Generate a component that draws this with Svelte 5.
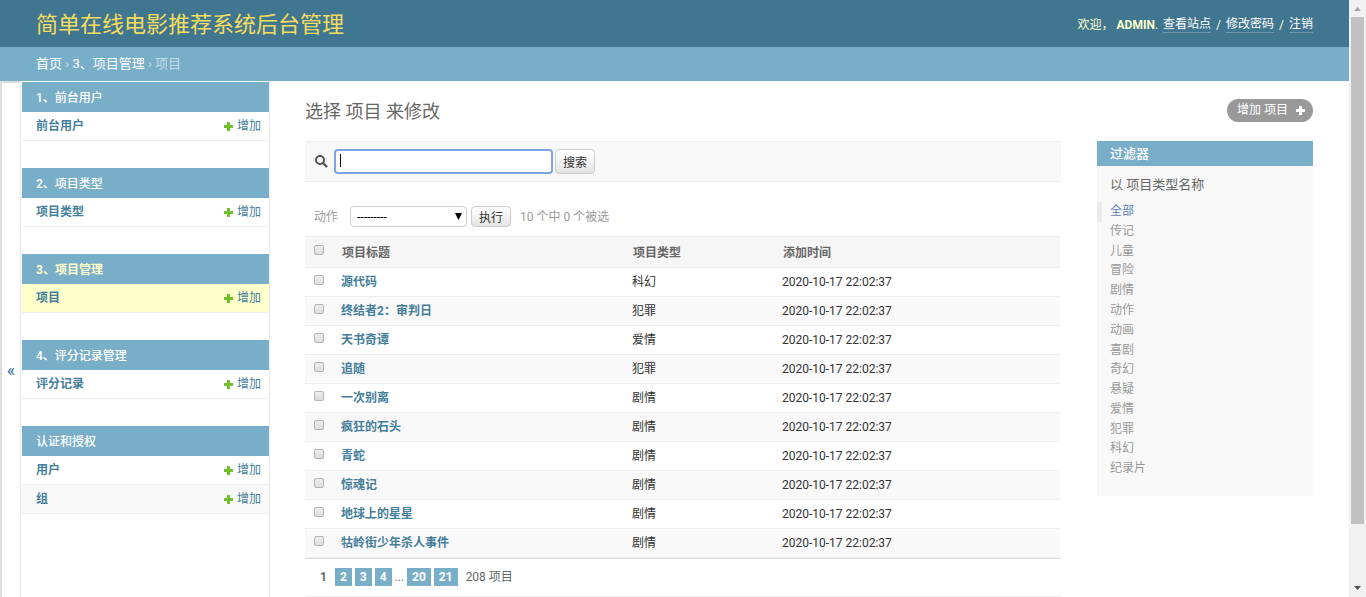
<script>
  const apps = [
    { name: '1、前台用户', models: ['前台用户'] },
    { name: '2、项目类型', models: ['项目类型'] },
    { name: '3、项目管理', models: ['项目'], current: true },
    { name: '4、评分记录管理', models: ['评分记录'] },
    { name: '认证和授权', models: ['用户', '组'] }
  ];

  const rows = [
    { title: '源代码', type: '科幻' },
    { title: '终结者2：审判日', type: '犯罪' },
    { title: '天书奇谭', type: '爱情' },
    { title: '追随', type: '犯罪' },
    { title: '一次别离', type: '剧情' },
    { title: '疯狂的石头', type: '剧情' },
    { title: '青蛇', type: '剧情' },
    { title: '惊魂记', type: '剧情' },
    { title: '地球上的星星', type: '剧情' },
    { title: '牯岭街少年杀人事件', type: '剧情' }
  ];
  const added = '2020-10-17 22:02:37';

  const filters = ['全部', '传记', '儿童', '冒险', '剧情', '动作', '动画', '喜剧', '奇幻', '悬疑', '爱情', '犯罪', '科幻', '纪录片'];

  let query = $state('');
  let selectedFilter = $state('全部');
  let checked = $state(rows.map(() => false));
  let showSidebar = $state(true);

  let count = $derived(checked.filter(Boolean).length);

  function toggleAll(e) {
    checked = rows.map(() => e.target.checked);
  }
</script>

<div class="shell">
  <div class="page">
    <header class="header">
      <h1 class="site-name"><a href="#home">简单在线电影推荐系统后台管理</a></h1>
      <div class="user-tools">
        <span>欢迎， <strong>ADMIN</strong>.</span>
        <a href="#site">查看站点</a>
        <span>/</span>
        <a href="#password">修改密码</a>
        <span>/</span>
        <a href="#logout">注销</a>
      </div>
    </header>

    <nav class="breadcrumbs">
      <a href="#home">首页</a> › <a href="#app3">3、项目管理</a> › 项目
    </nav>

    <div class="main">
      <button class="toggle" aria-label="切换导航" onclick={() => (showSidebar = !showSidebar)}>«</button>

      {#if showSidebar}
        <nav class="sidebar">
          {#each apps as app}
            <section class="module">
              <h2 class="caption" class:current={app.current}><a href="#{app.name}">{app.name}</a></h2>
              {#each app.models as model}
                <div class="model" class:current={app.current}>
                  <a class="model-name" href="#{model}">{model}</a>
                  <a class="add" href="#add-{model}">
                    <svg width="9" height="9" viewBox="0 0 9 9"><path d="M3 0h3v3h3v3H6v3H3V6H0V3h3z" fill="#70bf2b" /></svg>
                    增加
                  </a>
                </div>
              {/each}
            </section>
          {/each}
        </nav>
      {/if}

      <main class="content">
        <div class="title-row">
          <h2 class="title">选择 项目 来修改</h2>
          <a class="add-button" href="#add">
            增加 项目
            <svg width="9" height="9" viewBox="0 0 9 9"><path d="M3 0h3v3h3v3H6v3H3V6H0V3h3z" fill="#fff" /></svg>
          </a>
        </div>

        <div class="columns">
          <div class="changelist">
            <form class="search" onsubmit={(e) => e.preventDefault()}>
              <label for="searchbar" aria-label="搜索">
                <svg width="13" height="13" viewBox="0 0 13 13" fill="none" stroke="#555"><circle cx="5" cy="5" r="4" stroke-width="2" /><path d="M8 8l4 4" stroke-width="2.4" /></svg>
              </label>
              <input id="searchbar" class="searchbar" class:empty={!query} type="text" bind:value={query} />
              <button class="btn search-btn">搜索</button>
            </form>

            <div class="actions">
              <label for="action">动作</label>
              <div class="select-wrap">
                <select id="action">
                  <option>---------</option>
                  <option>删除所选的 项目</option>
                </select>
                <svg class="arrow" width="7" height="7" viewBox="0 0 7 7"><path d="M0 0h7L3.500 7z" fill="#000" /></svg>
              </div>
              <button class="btn">执行</button>
              <span class="counter">10 个中 {count} 个被选</span>
            </div>

            <table>
              <thead>
                <tr>
                  <th class="check"><input type="checkbox" aria-label="全选" onchange={toggleAll} /></th>
                  <th class="col-title">项目标题</th>
                  <th class="col-type">项目类型</th>
                  <th>添加时间</th>
                </tr>
              </thead>
              <tbody>
                {#each rows as row, i}
                  <tr>
                    <td class="check"><input type="checkbox" aria-label={row.title} bind:checked={checked[i]} /></td>
                    <td><a href="#item-{i}">{row.title}</a></td>
                    <td>{row.type}</td>
                    <td>{added}</td>
                  </tr>
                {/each}
              </tbody>
            </table>

            <div class="paginator">
              <span class="this-page">1</span>
              <a href="#p2">2</a>
              <a href="#p3">3</a>
              <a href="#p4">4</a>
              <span class="dots">...</span>
              <a href="#p20">20</a>
              <a href="#p21">21</a>
              <span class="total">208 项目</span>
            </div>
          </div>

          <aside class="filter">
            <h2>过滤器</h2>
            <h3>以 项目类型名称</h3>
            <ul>
              {#each filters as name}
                <li class:selected={name === selectedFilter}>
                  <a href="#filter-{name}" onclick={() => (selectedFilter = name)}>{name}</a>
                </li>
              {/each}
            </ul>
          </aside>
        </div>
      </main>
    </div>
  </div>

  <div class="scrollbar" aria-hidden="true">
    <svg width="17" height="17" viewBox="0 0 17 17"><path d="M5 11h7L8.500 7z" fill="#a3a3a3" /></svg>
    <div class="track"><div class="thumb"></div></div>
    <svg width="17" height="17" viewBox="0 0 17 17"><path d="M5 6h7L8.500 10z" fill="#505050" /></svg>
  </div>
</div>

<style>
  :global(body) { background: #fff; overflow: hidden; }

  .shell { display: flex; height: 100vh; overflow: hidden; font-family: Roboto, "Noto Sans CJK SC", sans-serif; font-size: 12px; line-height: 16px; color: #333; }
  .page { flex: 1; min-width: 0; display: flex; flex-direction: column; }
  a { color: #447e9b; text-decoration: none; }
  h1, h2, h3 { margin: 0; font-weight: 400; }
  button, input, select { font-family: inherit; font-size: 12px; box-sizing: border-box; margin: 0; }
  button { cursor: pointer; }
  svg { display: block; flex-shrink: 0; }

  .header { display: flex; align-items: center; justify-content: space-between; box-sizing: border-box; height: 47px; padding: 3px 36px 0; background: #417690; color: #ffc; flex-shrink: 0; }
  .site-name { font-size: 22px; line-height: 32px; }
  .site-name a { color: #f5dd5d; }
  .user-tools { display: flex; gap: 5px; }
  .user-tools a { color: #fff; border-bottom: 1px solid rgba(255, 255, 255, 0.25); line-height: 15px; }
  .user-tools strong { font-weight: 700; }

  .breadcrumbs { height: 34px; line-height: 34px; padding: 0 36px; font-size: 13px; background: #79aec8; color: #c4dce8; flex-shrink: 0; }
  .breadcrumbs a { color: #fff; }

  .main { flex: 1; min-height: 0; display: flex; overflow: hidden; }
  .toggle { width: 21px; flex-shrink: 0; padding: 60px 0 0; border: 0; border-left: 2px solid #ddd; border-top: 2px solid #ddd; border-right: 1px solid #eaeaea; background: #fff; color: #417690; font-size: 18px; line-height: 20px; }

  .sidebar { width: 247px; flex-shrink: 0; padding: 1px 0 0 1px; border-right: 1px solid #eaeaea; }
  .module { margin-bottom: 27px; }
  .caption { height: 30px; line-height: 32px; padding: 0 14px; font-size: 12px; font-weight: 500; background: #79aec8; }
  .caption a { color: #fff; }
  .caption.current a { color: #ffc; font-weight: 700; }
  .model { display: flex; justify-content: space-between; height: 28px; line-height: 29px; padding: 0 8px 0 14px; border-bottom: 1px solid #eee; }
  .model:nth-child(odd) { background: #f9f9f9; }
  .model.current { background: #ffc; }
  .model-name { font-weight: 700; }
  .add { display: flex; align-items: center; gap: 4px; }

  .content { flex: 1; min-width: 0; padding: 18px 36px 0 35px; }
  .title-row { display: flex; justify-content: space-between; align-items: flex-start; height: 42px; }
  .title { font-size: 18px; line-height: 26px; color: #666; }
  .add-button { display: flex; align-items: center; gap: 8px; height: 23px; line-height: 23px; padding: 0 8px 0 10px; border-radius: 12px; background: #999; color: #fff; }

  .columns { display: flex; gap: 36px; align-items: flex-start; }
  .changelist { flex: 1; min-width: 0; }

  .search { display: flex; align-items: center; height: 39px; padding: 0 10px; background: #f8f8f8; border-top: 1px solid #eee; border-bottom: 1px solid #eee; }
  .searchbar { width: 219px; height: 25px; margin: 0 2px 0 6px; padding: 2px 5px; border: 2px solid #7ba3e8; border-radius: 4px; background: #fff; outline: none; }
  .searchbar.empty { background: linear-gradient(#000, #000) 4px 3px / 1px 13px no-repeat #fff; }
  .btn { height: 21px; width: 40px; padding: 0; border: 1px solid #ccc; border-radius: 4px; background: linear-gradient(#fff, #e4e4e4); color: #333; }
  .search-btn { height: 25px; }

  .actions { display: flex; align-items: center; height: 21px; padding: 24px 9px 9px; color: #999; }
  .select-wrap { position: relative; margin: 0 4px 0 12px; }
  select { display: block; width: 117px; height: 21px; padding: 0 6px; appearance: none; border: 1px solid #ccc; border-radius: 4px; background: #fff; color: #000; }
  .arrow { position: absolute; right: 5px; top: 7px; pointer-events: none; }
  .counter { margin-left: 9px; }

  table { width: calc(100% - 1px); border-collapse: separate; border-spacing: 0; table-layout: fixed; }
  th, td { height: 28px; padding: 0; text-align: left; border-bottom: 1px solid #eee; }
  th { height: 28px; padding: 2px 0 0 1px; border-top: 1px solid #eee; background: #f6f6f6; color: #666; font-weight: 700; }
  td a { font-weight: 700; }
  tbody tr:nth-child(even) td { background: #f9f9f9; }
  .check { width: 36px; padding: 0 0 4px 9px; box-sizing: border-box; }
  .col-title { width: 290px; }
  .col-type { width: 149px; }
  input[type="checkbox"] { display: block; appearance: none; width: 10px; height: 10px; border: 1px solid #b4b4b4; border-radius: 2px; background: linear-gradient(#eee, #dcdcdc); }
  input[type="checkbox"]:checked { background: #447e9b; }

  .paginator { display: flex; align-items: center; gap: 3px; height: 35px; padding: 0 0 2px 15px; border-top: 1px solid #ddd; border-bottom: 1px solid #eee; color: #666; }
  .paginator a { height: 18px; line-height: 18px; padding: 0 5px; background: #79aec8; color: #fff; font-weight: 700; }
  .this-page { font-weight: 700; margin-right: 5px; }
  .total { margin-left: 5px; }

  .filter { width: 216px; flex-shrink: 0; padding-bottom: 17px; background: #f8f8f8; }
  .filter h2 { height: 25px; line-height: 25px; padding: 0 13px; font-size: 13px; font-weight: 500; background: #79aec8; color: #fff; }
  .filter h3 { padding: 10px 13px 9px; font-size: 13px; line-height: 17px; color: #666; }
  .filter ul { display: grid; grid-auto-rows: 1fr; height: 277px; margin: 0; padding: 0; list-style: none; }
  .filter li { padding-left: 13px; line-height: 19px; }
  .filter li a { color: #999; }
  .filter li.selected { padding-left: 8px; border-left: 5px solid #eaeaea; }
  .filter li.selected a { color: #5b80b2; }

  .scrollbar { width: 17px; flex-shrink: 0; display: flex; flex-direction: column; background: #f1f1f1; }
  .track { flex: 1; }
  .thumb { height: 90%; margin: 0 2px; background: #c1c1c1; }
</style>
